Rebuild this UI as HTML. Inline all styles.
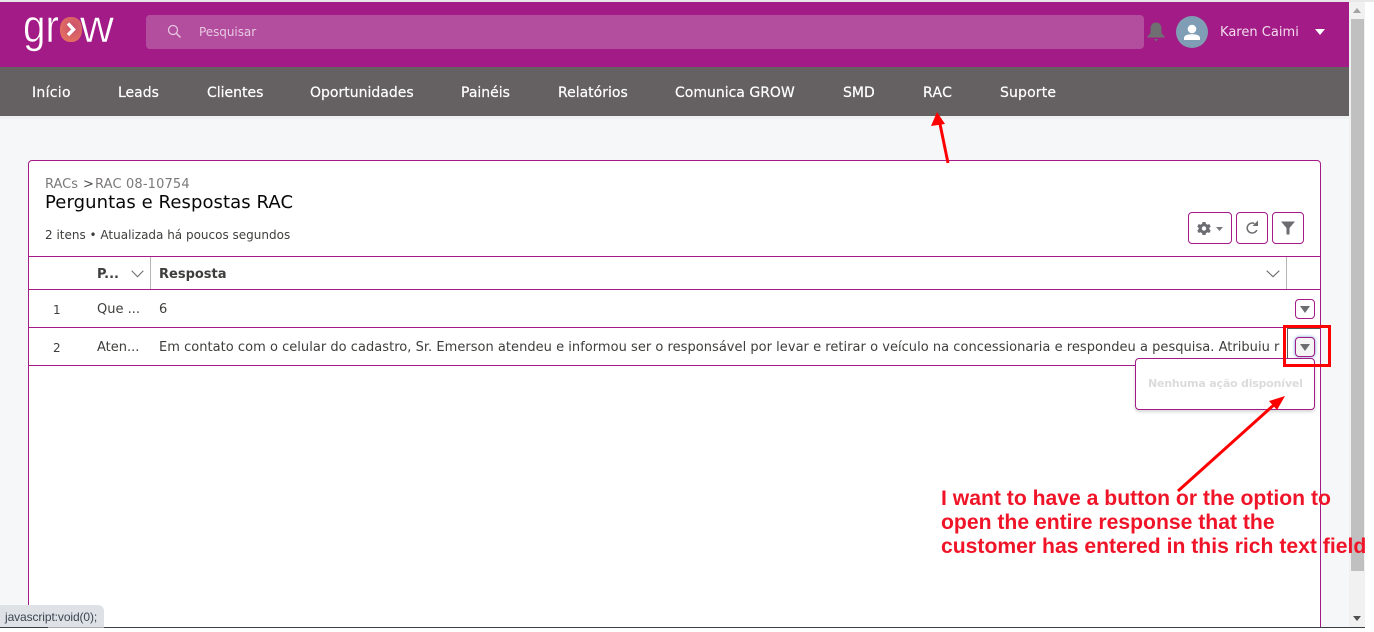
<!DOCTYPE html>
<html lang="pt">
<head>
<meta charset="utf-8">
<title>Perguntas e Respostas RAC</title>
<style>
html,body{margin:0;padding:0;width:1374px;height:632px;overflow:hidden;background:#fff}
body{position:relative;font-family:"DejaVu Sans",Verdana,sans-serif;color:#3e3e3c}
.a{position:absolute;white-space:nowrap}
.nav{top:84px;font-size:14px;line-height:18px;color:#fff;font-weight:400;-webkit-text-stroke:.2px #fff}
.h{background:#a31b86}
.bd{background:#a31b86}
.btn{position:absolute;box-sizing:border-box;background:#fff;border:1px solid #a31b86;border-radius:4px}
.logo{font:400 46px/50px 'Liberation Sans',sans-serif;color:#fff;-webkit-text-stroke:.6px #a31b86}
.t{font-size:13px;line-height:16px}
</style>
</head>
<body>
<!-- page bg -->
<div class="a" style="left:0;top:0;width:1349px;height:628px;background:#f6f7f9"></div>
<div class="a" style="left:0;top:0;width:1374px;height:2px;background:#e8e8e8"></div>
<!-- header -->
<div class="a h" style="left:0;top:2px;width:1349px;height:65px"></div>
<div class="a" style="left:0;top:67px;width:1349px;height:49px;background:#656163"></div>
<div class="a" style="left:0;top:116px;width:1349px;height:3px;background:#eff0f2"></div>
<!-- logo -->
<div class="a logo" style="left:23px;top:1px;transform:scaleX(.88);transform-origin:left">gr</div>
<div class="a logo" style="left:80px;top:1px;transform:scaleX(1.02);transform-origin:left">w</div>
<div class="a" style="left:60px;top:17px;width:22px;height:25px;border-radius:45%;background:radial-gradient(circle at 60% 40%,#c9506f,#e4705f 75%)"></div>
<svg class="a" style="left:60px;top:17px" width="23" height="25" viewBox="0 0 23 25"><path d="M8 6.500l5.500 6-5.500 5.500" fill="none" stroke="#fff" stroke-width="3.400"/></svg>
<!-- search -->
<div class="a" style="left:146px;top:15px;width:998px;height:34px;background:#b34d9e;border-radius:4px"></div>
<svg class="a" style="left:167px;top:24px" width="15" height="15" viewBox="0 0 15 15"><circle cx="6" cy="6" r="4.500" fill="none" stroke="#e6c5df" stroke-width="1.300"/><path d="M9.500 9.500l4 4" stroke="#e6c5df" stroke-width="1.500"/></svg>
<div class="a" style="left:199px;top:24px;font-size:12px;line-height:17px;color:#e8c8e1;letter-spacing:-.05px">Pesquisar</div>
<!-- bell -->
<svg class="a" style="left:1146px;top:21px" width="20" height="21" viewBox="0 0 20 21"><path d="M10 1.500c-3.600 0-5.500 2.800-5.500 6v4.500L1.500 15.500v1h17v-1L15.500 12V7.500c0-3.200-1.900-6-5.500-6z" fill="#6f6f71"/><path d="M8 18h4l-2 2.500z" fill="#6f6f71"/></svg>
<!-- avatar -->
<div class="a" style="left:1176px;top:16px;width:32px;height:32px;border-radius:50%;background:#7f9db4"></div>
<svg class="a" style="left:1176px;top:16px" width="32" height="32" viewBox="0 0 32 32"><circle cx="16" cy="13" r="4.300" fill="#fff"/><path d="M8 24v-2c0-2.500 3-3.800 8-3.800s8 1.300 8 3.800v2z" fill="#fff"/></svg>
<div class="a" style="left:1220px;top:24px;font-size:13px;line-height:17px;color:#f2dcee;letter-spacing:.02px">Karen Caimi</div>
<svg class="a" style="left:1315px;top:29px" width="10" height="6"><path d="M0 0h10L5 6z" fill="#fff"/></svg>
<!-- nav -->
<div class="a nav" style="left:32px;letter-spacing:.3px">Início</div>
<div class="a nav" style="left:118px">Leads</div>
<div class="a nav" style="left:207px">Clientes</div>
<div class="a nav" style="left:310px">Oportunidades</div>
<div class="a nav" style="left:461px">Painéis</div>
<div class="a nav" style="left:558px">Relatórios</div>
<div class="a nav" style="left:675px">Comunica GROW</div>
<div class="a nav" style="left:843px">SMD</div>
<div class="a nav" style="left:923px;letter-spacing:.3px">RAC</div>
<div class="a nav" style="left:1000px;letter-spacing:.15px">Suporte</div>
<!-- card -->
<div class="a" style="left:28px;top:160px;width:1293px;height:480px;box-sizing:border-box;background:#fff;border:1px solid #a31b86;border-radius:4px 4px 0 0"></div>
<div class="a" style="left:45px;top:177px;font-size:13px;line-height:15px;color:#7b7878">RACs</div>
<div class="a" style="left:83px;top:177px;font-size:13px;line-height:15px;color:#4b4b4b">&gt;</div>
<div class="a" style="left:95px;top:177px;font-size:13px;line-height:15px;color:#7b7878;letter-spacing:.15px">RAC 08-10754</div>
<div class="a" style="left:45px;top:192px;font-size:18px;line-height:21px;color:#080707;letter-spacing:.08px">Perguntas e Respostas RAC</div>
<div class="a" style="left:45px;top:228px;font-size:12px;line-height:15px;color:#3e3e3c">2 itens • Atualizada há poucos segundos</div>
<!-- toolbar -->
<div class="btn" style="left:1188px;top:212px;width:44px;height:32px"></div>
<svg class="a" style="left:1197px;top:221px" width="14" height="15" viewBox="0 0 14 15"><path d="M5.500 1h3l.4 1.800 1.700.9L12.300 3l1.400 2.500-1.300 1.200v1.600l1.300 1.200-1.400 2.500-1.700-.7-1.700.9L8.500 14h-3l-.4-1.800-1.700-.9-1.700.7L.3 9.500l1.300-1.200V6.700L.3 5.500 1.700 3l1.700.7 1.700-.9z" fill="#6b6d70"/><circle cx="7" cy="7.500" r="2.200" fill="#fff"/></svg>
<svg class="a" style="left:1216px;top:227px" width="7" height="4"><path d="M0 0h7L3.500 4z" fill="#77797c"/></svg>
<div class="btn" style="left:1236px;top:212px;width:32px;height:32px"></div>
<svg class="a" style="left:1245px;top:220px" width="15" height="15" viewBox="0 0 15 15"><path d="M11.800 10A5 5 0 1 1 9.500 3.600" fill="none" stroke="#6b6d70" stroke-width="1.500"/><path d="M7.500 6h5.500V.5z" fill="#6b6d70"/></svg>
<div class="btn" style="left:1272px;top:212px;width:32px;height:32px"></div>
<svg class="a" style="left:1281px;top:221px" width="14" height="14" viewBox="0 0 14 14"><path d="M0 .5h14L8.500 7v6.500h-3V7z" fill="#6b6d70"/></svg>
<!-- table lines -->
<div class="a bd" style="left:29px;top:256px;width:1291px;height:1px"></div>
<div class="a bd" style="left:29px;top:289px;width:1291px;height:1px"></div>
<div class="a bd" style="left:29px;top:327px;width:1291px;height:1px"></div>
<div class="a bd" style="left:29px;top:365px;width:1291px;height:1px"></div>
<div class="a" style="left:150px;top:257px;width:1px;height:32px;background:#b5b5b5"></div>
<div class="a" style="left:1286px;top:257px;width:1px;height:32px;background:#b5b5b5"></div>
<!-- table head -->
<div class="a t" style="left:97px;top:267px;font-weight:700;color:#3e3e3c">P...</div>
<svg class="a" style="left:131px;top:270px" width="13" height="8" viewBox="0 0 13 8"><path d="M.7.700l5.800 6 5.800-6" fill="none" stroke="#706e6b" stroke-width="1.100"/></svg>
<div class="a t" style="left:159px;top:267px;font-weight:700;color:#3e3e3c">Resposta</div>
<svg class="a" style="left:1266px;top:270px" width="14" height="8" viewBox="0 0 14 8"><path d="M.7.700l6.300 6 6.300-6" fill="none" stroke="#706e6b" stroke-width="1.100"/></svg>
<!-- rows -->
<div class="a" style="left:53px;top:302px;font-size:12px;line-height:16px">1</div>
<div class="a t" style="left:97px;top:302px">Que ...</div>
<div class="a t" style="left:159px;top:302px">6</div>
<div class="btn" style="left:1295px;top:299px;width:20px;height:20px"></div>
<svg class="a" style="left:1300px;top:306px" width="10" height="7"><path d="M0 0h10L5 7z" fill="#6b6d70"/></svg>
<div class="a" style="left:53px;top:340px;font-size:12px;line-height:16px">2</div>
<div class="a t" style="left:97px;top:340px">Aten...</div>
<div class="a t" style="left:159px;top:340px;width:1122px;overflow:hidden;letter-spacing:.03px">Em contato com o celular do cadastro, Sr. Emerson atendeu e informou ser o responsável por levar e retirar o veículo na concessionaria e respondeu a pesquisa. Atribuiu r</div>
<div class="a" style="left:1287px;top:328px;width:33px;height:37px;background:#fff;border-left:1px solid #555;border-top:1px solid #555;box-sizing:border-box"></div>
<div class="btn" style="left:1295px;top:337px;width:20px;height:20px;background:#f4f4f4;box-shadow:0 0 3px #6a9bd8"></div>
<svg class="a" style="left:1300px;top:344px" width="10" height="7"><path d="M0 0h10L5 7z" fill="#6b6d70"/></svg>
<!-- dropdown -->
<div class="btn" style="left:1135px;top:358px;width:180px;height:52px;box-shadow:0 2px 3px rgba(0,0,0,.16)"></div>
<div class="a" style="left:1148px;top:376px;font-size:11px;line-height:16px;font-weight:700;color:#dddbda;letter-spacing:-.2px">Nenhuma ação disponível</div>
<!-- red box -->
<div class="a" style="left:1283px;top:325px;width:48px;height:42px;box-sizing:border-box;border:3px solid #fe0000"></div>
<!-- scrollbar -->
<div class="a" style="left:1349px;top:2px;width:16px;height:625px;background:#f1f1f1"></div>
<div class="a" style="left:1351px;top:19px;width:13px;height:552px;background:#c0c0c0"></div>
<svg class="a" style="left:1353px;top:8px" width="8" height="5"><path d="M0 5h8L4 0z" fill="#a3a3a3"/></svg>
<svg class="a" style="left:1353px;top:616px" width="8" height="5"><path d="M0 0h8L4 5z" fill="#505050"/></svg>
<!-- red annotations -->
<svg class="a" style="left:0;top:0" width="1374" height="632">
<path d="M948 163L940 124" stroke="#fe0000" stroke-width="3"/><path d="M937 112l-6 14 14-2z" fill="#fe0000"/>
<path d="M1178 491L1276 403" stroke="#fe0000" stroke-width="3"/><path d="M1285 396l-16 5 8 9z" fill="#fe0000"/>
</svg>
<div class="a" style="left:941px;top:487px;font:700 21.150px/24px 'Liberation Sans',Arial,sans-serif;color:#f01428">I want to have a button or the option to<br>open the entire response that the<br>customer has entered in this rich text field</div>
<!-- bottom line and status -->
<div class="a" style="left:0;top:628px;width:1374px;height:4px;background:#fff"></div>
<div class="a" style="left:0;top:627px;width:1365px;height:1px;background:#3a3f45"></div>
<div class="a" style="left:0;top:605px;width:104px;height:22px;background:#dee1e6;border-radius:0 6px 0 0"></div>
<div class="a" style="left:48px;top:627px;width:56px;height:1px;background:#aaa"></div>
<div class="a" style="left:5px;top:610px;font:12px/15px 'Liberation Sans',Arial,sans-serif;color:#3c4650;letter-spacing:-.1px">javascript:void(0);</div>
</body>
</html>
